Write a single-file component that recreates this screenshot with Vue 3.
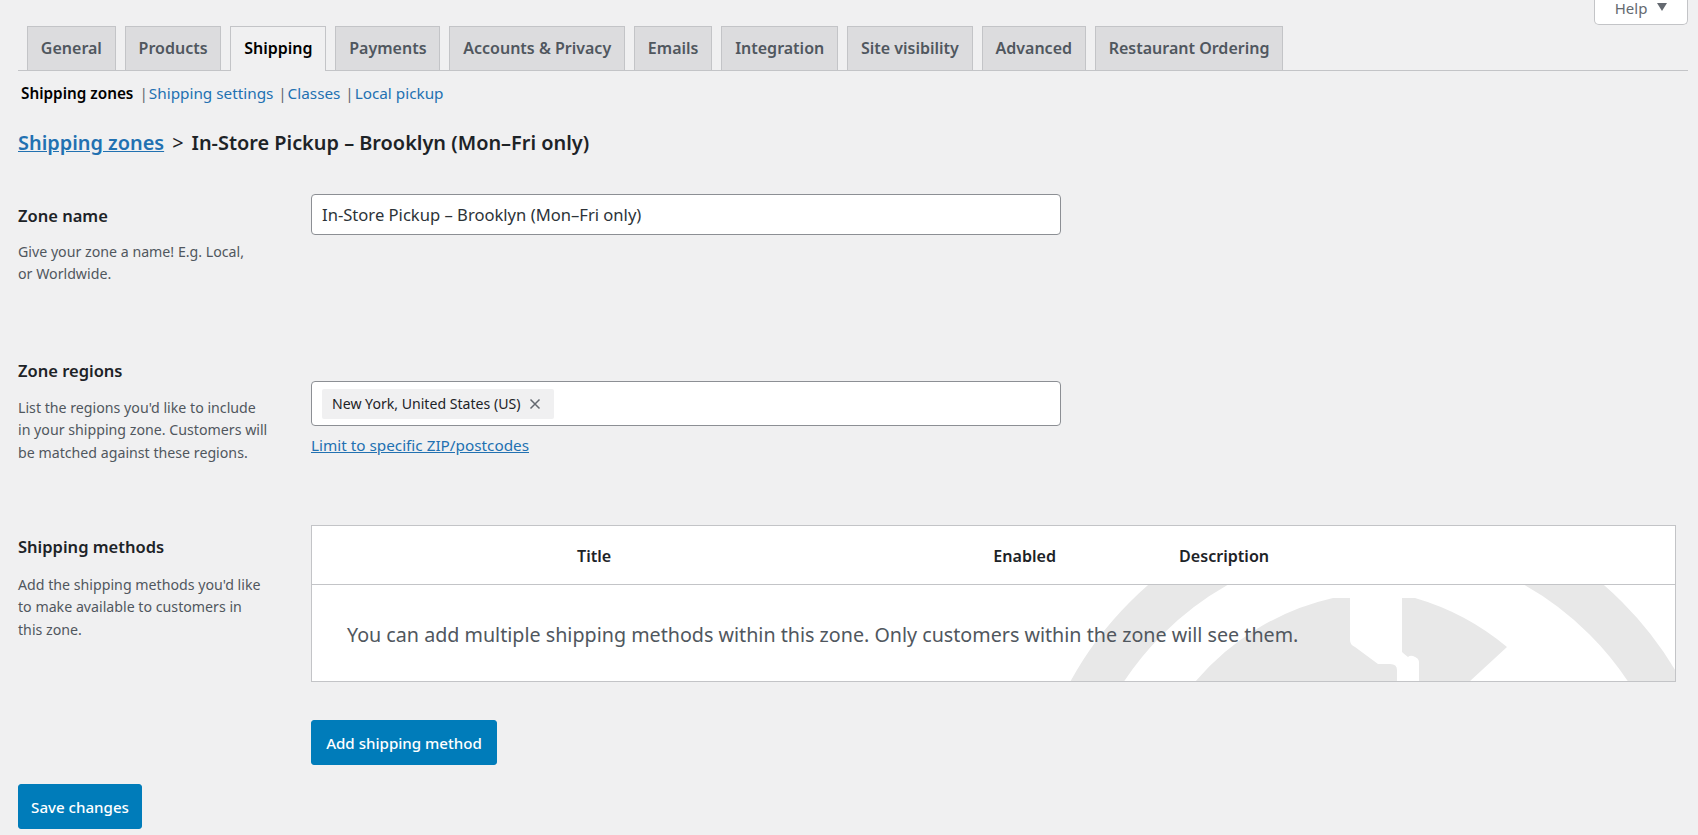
<template>
  <div class="page">
    <!-- Help -->
    <div class="screen-meta">
      <button class="help-btn">Help <span class="caret"></span></button>
    </div>

    <!-- Tabs -->
    <nav class="tabs">
      <a v-for="tab in tabs" :key="tab" :class="['tab', { active: tab === 'Shipping' }]">{{ tab }}</a>
    </nav>

    <!-- Sub navigation -->
    <ul class="subnav">
      <li class="current">Shipping zones</li>
      <li v-for="link in sublinks" :key="link"><span class="sep">|</span><a>{{ link }}</a></li>
    </ul>

    <h2 class="breadcrumb"><a>Shipping zones</a><span class="gt">&gt;</span>In-Store Pickup – Brooklyn (Mon–Fri only)</h2>

    <!-- Zone name -->
    <section class="row row-name">
      <div class="info">
        <h3>Zone name</h3>
        <p>Give your zone a name! E.g. Local,<br />or Worldwide.</p>
      </div>
      <div class="field">
        <input class="text-input" type="text" v-model="zoneName" />
      </div>
    </section>

    <!-- Zone regions -->
    <section class="row row-regions">
      <div class="info">
        <h3>Zone regions</h3>
        <p>List the regions you'd like to include<br />in your shipping zone. Customers will<br />be matched against these regions.</p>
      </div>
      <div class="field">
        <div class="region-box">
          <span class="chip">New York, United States (US)
            <svg class="chip-x" viewBox="0 0 12 12"><path d="M1.5 1.5l9 9M10.5 1.5l-9 9" /></svg>
          </span>
        </div>
        <a class="limit-link">Limit to specific ZIP/postcodes</a>
      </div>
    </section>

    <!-- Shipping methods -->
    <section class="row row-methods">
      <div class="info">
        <h3>Shipping methods</h3>
        <p>Add the shipping methods you'd like<br />to make available to customers in<br />this zone.</p>
      </div>
      <div class="field">
        <div class="methods-table">
          <div class="methods-head">
            <span class="col-title">Title</span>
            <span class="col-enabled">Enabled</span>
            <span class="col-desc">Description</span>
          </div>
          <div class="methods-body">
            <svg class="watermark" viewBox="0 0 1363 96">
              <circle cx="1064" cy="263" r="325" fill="none" stroke="#e8e8e8" stroke-width="46" />
              <path fill="#e8e8e8" d="M883 97A254 254 0 0 1 1021 13H1038V55Q1038 60 1043 62L1066 79H1078Q1085 79 1085 85V97H1107V77Q1107 73 1101 71Q1098 70 1096 72Q1092 69 1090 67V13H1103A254 254 0 0 1 1195 62L1157 97Z" />
            </svg>
            <p>You can add multiple shipping methods within this zone. Only customers within the zone will see them.</p>
          </div>
        </div>
        <button class="btn add-btn">Add shipping method</button>
      </div>
    </section>

    <button class="btn save-btn">Save changes</button>
  </div>
</template>

<script setup>
import { ref } from 'vue'

const tabs = ['General', 'Products', 'Shipping', 'Payments', 'Accounts & Privacy', 'Emails', 'Integration', 'Site visibility', 'Advanced', 'Restaurant Ordering']
const sublinks = ['Shipping settings', 'Classes', 'Local pickup']
const zoneName = ref('In-Store Pickup – Brooklyn (Mon–Fri only)')
</script>

<style>
html, body {
  margin: 0;
  background: #f0f0f1;
}
</style>

<style scoped>
.page {
  height: 835px;
  box-sizing: border-box;
  padding: 0 10px 0 18px;
  background: #f0f0f1;
  font-family: "Noto Sans", "Open Sans", sans-serif;
  font-size: 15px;
  color: #3c434a;
  overflow: hidden;
}

/* Help */
.screen-meta {
  display: flex;
  justify-content: flex-end;
  height: 26px;
}

.help-btn {
  width: 94px;
  height: 25px;
  box-sizing: border-box;
  padding: 0 0 8px;
  border: 1px solid #c3c4c7;
  border-top: none;
  border-radius: 0 0 5px 5px;
  background: #fff;
  color: #646970;
  font: inherit;
  font-size: 15px;
  line-height: 16px;
}

.caret {
  display: inline-block;
  width: 0;
  height: 0;
  margin-left: 6px;
  vertical-align: 3px;
  border-left: 5px solid transparent;
  border-right: 5px solid transparent;
  border-top: 8px solid #646970;
}

/* Tabs */
.tabs {
  display: flex;
  gap: 9px;
  height: 44px;
  padding-left: 9px;
  border-bottom: 1px solid #c3c4c7;
}

.tab {
  height: 44px;
  box-sizing: border-box;
  padding: 0 12.85px;
  border: 1px solid #c3c4c7;
  border-bottom: none;
  background: #dcdcde;
  color: #50575e;
  font-size: 16px;
  font-weight: 600;
  line-height: 42px;
  white-space: nowrap;
}

.tab.active {
  height: 45px;
  background: #f0f0f1;
  color: #000;
}

/* Sub navigation */
.subnav {
  display: flex;
  margin: 11px 0 0;
  padding: 0 0 0 3px;
  list-style: none;
  font-size: 15.3px;
  line-height: 22px;
  color: #2271b1;
}

.subnav a {
  color: #2271b1;
}

.subnav .current {
  color: #000;
  font-weight: 600;
  margin-right: 6px;
}

.subnav .sep {
  color: #646970;
  margin-right: 1px;
}

.subnav li + li {
  margin-right: 4.8px;
}

/* Breadcrumb */
.breadcrumb {
  margin: 25px 0 0;
  font-size: 19.9px;
  font-weight: 600;
  line-height: 28px;
  color: #1d2327;
}

.breadcrumb a {
  color: #2271b1;
  text-decoration: underline;
}

.breadcrumb .gt {
  margin: 0 8px;
  font-weight: 400;
}

/* Form rows */
.row {
  display: grid;
  grid-template-columns: 293px 1fr;
}

.row-name {
  margin-top: 37px;
  height: 165px;
}

.row-regions {
  height: 166px;
}

.row-regions .field {
  padding-top: 22px;
}

.info h3 {
  margin: 0;
  font-size: 16.5px;
  font-weight: 600;
  line-height: 24px;
  color: #1d2327;
}

.row-name .info h3,
.row-methods .info h3 {
  margin-top: 10px;
}

.info p {
  margin: 15px 0 0;
  font-size: 14.2px;
  line-height: 22.4px;
  color: #50575e;
}

.row-regions .info p {
  margin-top: 14px;
}

.row-name .info p {
  margin-top: 13px;
}

.text-input {
  display: block;
  width: 750px;
  height: 41px;
  box-sizing: border-box;
  padding: 0 10px;
  border: 1px solid #8c8f94;
  border-radius: 4px;
  background: #fff;
  color: #2c3338;
  font: inherit;
  font-size: 16.6px;
}

.region-box {
  display: flex;
  align-items: center;
  width: 750px;
  height: 45px;
  box-sizing: border-box;
  padding: 0 10px;
  border: 1px solid #8c8f94;
  border-radius: 4px;
  background: #fff;
}

.chip {
  display: flex;
  align-items: center;
  height: 30px;
  padding: 0 13px 0 10px;
  border-radius: 2px;
  background: #f0f0f1;
  color: #1d2327;
  font-size: 14.1px;
}

.chip-x {
  width: 12px;
  height: 12px;
  margin-left: 9px;
  fill: none;
  stroke: #646970;
  stroke-width: 1.5;
}

.limit-link {
  display: block;
  margin-top: 8px;
  font-size: 15.3px;
  line-height: 22px;
  color: #2271b1;
  text-decoration: underline;
}

/* Methods table */
.methods-table {
  width: 1365px;
  box-sizing: border-box;
  border: 1px solid #c3c4c7;
  background: #fff;
}

.methods-head {
  display: flex;
  align-items: center;
  height: 59px;
  box-sizing: border-box;
  padding-top: 1px;
  border-bottom: 1px solid #c3c4c7;
  font-size: 16.1px;
  font-weight: 600;
  color: #1d2327;
}

.col-title {
  margin-left: 265px;
}

.col-enabled {
  margin-left: 382px;
}

.col-desc {
  margin-left: 123px;
}

.methods-body {
  position: relative;
  height: 96px;
  overflow: hidden;
}

.methods-body p {
  position: relative;
  margin: 0;
  padding: 36px 0 0 35px;
  font-size: 19.7px;
  line-height: 28px;
  color: #50575e;
}

.watermark {
  position: absolute;
  left: 0;
  top: 0;
  width: 1363px;
  height: 96px;
}

/* Buttons */
.btn {
  display: block;
  height: 45px;
  box-sizing: border-box;
  border: 1px solid #007cba;
  border-radius: 3px;
  background: #007cba;
  color: #fff;
  font: inherit;
  font-size: 15.1px;
  font-weight: 500;
}

.add-btn {
  width: 186px;
  margin-top: 38px;
}

.save-btn {
  width: 124px;
  margin-top: 19px;
}
</style>
